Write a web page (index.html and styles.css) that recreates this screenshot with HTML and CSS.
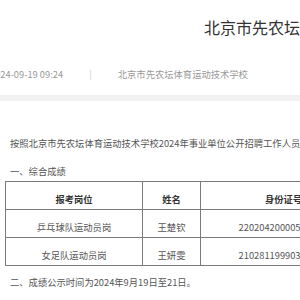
FILE: index.html
```html
<!DOCTYPE html>
<html lang="zh-CN">
<head>
<meta charset="utf-8">
<title>成绩公示</title>
<link rel="stylesheet" href="styles.css">
</head>
<body>
<div class="page">
  <h1 class="title">北京市先农坛体育运动技术学校2024年事业单位公开招聘工作人员综合成绩公示</h1>
  <div class="meta">
    <span class="date">2024-09-19 09:24</span>
    <span class="sep">|</span>
    <span class="source">北京市先农坛体育运动技术学校</span>
  </div>
  <div class="band"></div>
  <div class="content">
    <p class="lead">按照北京市先农坛体育运动技术学校2024年事业单位公开招聘工作人员综合成绩公示如下：</p>
    <p class="section">一、综合成绩</p>
    <table class="scores">
      <colgroup>
        <col class="c-post">
        <col class="c-name">
        <col class="c-id">
      </colgroup>
      <thead>
        <tr><th>报考岗位</th><th>姓名</th><th>身份证号</th></tr>
      </thead>
      <tbody>
        <tr><td>乒乓球队运动员岗</td><td>王楚钦</td><td>2202042000050****X</td></tr>
        <tr><td>女足队运动员岗</td><td>王妍雯</td><td>2102811999030****X</td></tr>
      </tbody>
    </table>
    <p class="section after">二、成绩公示时间为2024年9月19日至21日。</p>
  </div>
</div>
</body>
</html>
```

FILE: styles.css
```css
html, body {
  margin: 0;
  padding: 0;
  overflow: hidden;
  background: #fff;
}
body {
  font-family: "Noto Sans CJK SC", "Microsoft YaHei", sans-serif;
  color: #555;
}
.page {
  width: 300px;
  overflow: hidden;
}
.title {
  margin: 0;
  padding: 17px 0 0 204px;
  font-size: 16px;
  line-height: 20px;
  font-weight: normal;
  color: #333;
  white-space: nowrap;
}
.meta {
  margin: 30px 0 0 -10px;
  font-size: 9.3px;
  line-height: 14px;
  color: #999;
  white-space: nowrap;
}
.sep {
  margin: 0 24px;
  color: #ccc;
}
.band {
  margin-top: 14px;
  height: 6px;
  background: #f2f2f2;
}
.content {
  font-size: 9.3px;
  line-height: 14px;
}
.lead {
  margin: 35px 0 0 10px;
  white-space: nowrap;
}
.section {
  margin: 14px 0 0 10px;
  white-space: nowrap;
}
.section.after {
  margin-top: 9px;
}
.scores {
  margin: 3px 0 0 5px;
  border-collapse: collapse;
  table-layout: fixed;
  width: 361px;
}
.c-post { width: 137px; }
.c-name { width: 58px; }
.c-id { width: 166px; }
.scores th,
.scores td {
  border: 1px solid #7a7a7a;
  padding: 10px 0 3px;
  text-align: center;
  white-space: nowrap;
  font-weight: normal;
  line-height: 14px;
}
.scores th {
  font-weight: bold;
  color: #333;
}
```
